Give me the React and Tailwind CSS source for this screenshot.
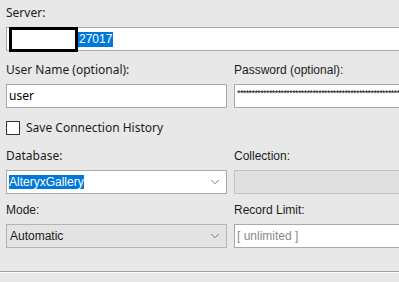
import { ChevronDown } from "lucide-react";

function Label({ children, className = "" }) {
  return <p className={`h-4 text-[12px] leading-4 text-[#1c1c1c] ${className}`}>{children}</p>;
}

function Select({ value, selected, disabled }) {
  return (
    <div
      className={`flex h-[24px] items-center border pl-[2px] ${
        disabled ? "border-[#b4b4b4] bg-[#e3e3e3]" : "border-[#a9a9a9] bg-white"
      }`}
    >
      <span
        className={`flex-1 text-[12px] leading-[14px] font-['Liberation_Sans',sans-serif] ${
          selected ? "" : "px-[1px]"
        }`}
      >
        <span className={selected ? "bg-[#0078d7] text-white" : "text-[#1a1a1a]"}>{value}</span>
      </span>
      <ChevronDown className="mr-[4px] h-[14px] w-[14px] text-[#606060]" strokeWidth={1.4} />
    </div>
  );
}

export default function App() {
  return (
    <div className="h-[282px] w-[399px] overflow-hidden bg-[#e8e8e8] font-['Noto_Sans',sans-serif]">
      <div className="grid w-[440px] grid-cols-[221px_212px] gap-x-[7px] pl-[6px]">
        <div className="col-span-2 pt-[5px]">
          <Label>Server:</Label>
          <div className="relative mt-[6px] flex h-[24px] items-center border border-[#a9a9a9] bg-white">
            <div className="absolute left-[2px] top-[-1px] h-[25px] w-[69px] border-[3px] border-black bg-white" />
            <span className="ml-[71px] bg-[#0078d7] px-[1px] text-[12px] leading-[15px] text-white font-['Liberation_Sans',sans-serif]">
              27017
            </span>
          </div>
        </div>

        <div className="pt-[11px]">
          <Label>User Name (optional):</Label>
          <div className="mt-[6px] flex h-[24px] items-center border border-[#a9a9a9] bg-white pl-[2px] text-[12px] text-black">
            user
          </div>
        </div>
        <div className="pt-[11px]">
          <Label className="font-['Liberation_Sans',sans-serif]">Password (optional):</Label>
          <div className="mt-[6px] h-[24px] overflow-hidden border border-[#a9a9a9] bg-white pl-[2px] pt-[2px]">
            <span className="block w-[170px] whitespace-nowrap text-[9px] tracking-[-0.6px] text-black font-['Liberation_Sans',sans-serif]">
              {"*".repeat(56)}
            </span>
          </div>
        </div>

        <label className="col-span-2 mt-[12px] flex items-center gap-[6px]">
          <span className="h-[14px] w-[14px] border border-[#333] bg-white" />
          <span className="text-[12px] leading-4 text-[#1c1c1c]">Save Connection History</span>
        </label>

        <div className="pt-[12px]">
          <Label>Database:</Label>
          <div className="mt-[6px]">
            <Select value="AlteryxGallery" selected />
          </div>
        </div>
        <div className="pt-[12px]">
          <Label className="font-['Liberation_Sans',sans-serif]">Collection:</Label>
          <div className="mt-[6px] h-[24px] border border-[#c2c2c2] bg-[#e0e0e0]" />
        </div>

        <div className="pt-[8px]">
          <Label className="font-['Liberation_Sans',sans-serif]">Mode:</Label>
          <div className="mt-[6px]">
            <Select value="Automatic" disabled />
          </div>
        </div>
        <div className="pt-[8px]">
          <Label className="font-['Liberation_Sans',sans-serif]">Record Limit:</Label>
          <div className="mt-[6px] flex h-[24px] items-center border border-[#a9a9a9] bg-white pl-[2px] text-[12px] text-[#8a8a8a] font-['Liberation_Sans',sans-serif]">
            [ unlimited ]
          </div>
        </div>
      </div>
      <div className="mt-[23px] h-[2px] border-t border-[#a0a0a0] bg-white" />
    </div>
  );
}
